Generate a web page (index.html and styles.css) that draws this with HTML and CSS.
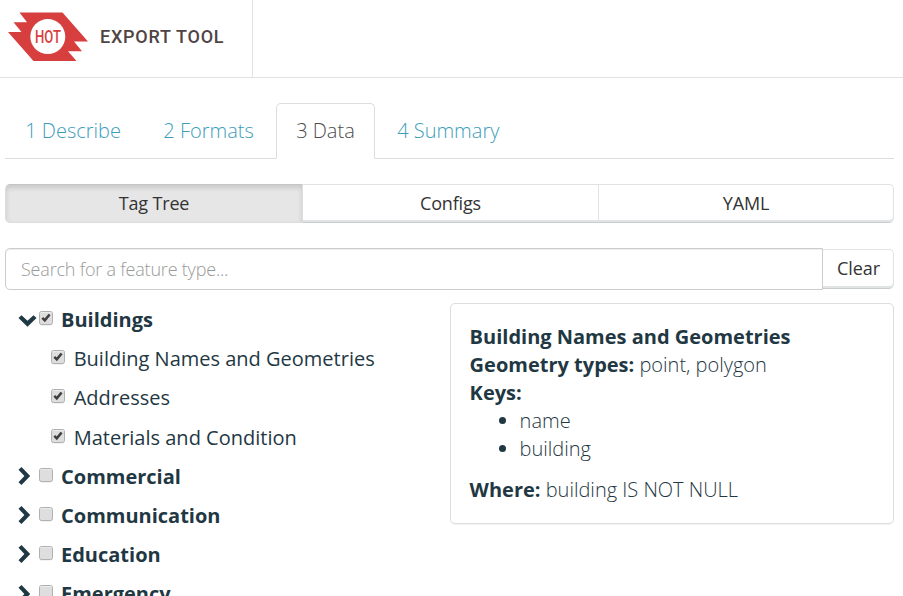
FILE: index.html
```html
<!DOCTYPE html>
<html lang="en">
<head>
<meta charset="utf-8">
<title>Export Tool</title>
<link rel="stylesheet" href="styles.css">
</head>
<body>
<svg class="sprite" aria-hidden="true">
  <defs>
    <symbol id="unchecked" viewBox="0 0 14 15"><rect x=".5" y="1.5" width="13" height="13" rx="2" fill="#000" opacity=".1"/><rect x=".5" y=".5" width="13" height="13" rx="2" fill="#dedede" stroke="#b0b0b0"/><path d="M1.500 1.500H12.500" stroke="#ebebeb"/></symbol>
    <symbol id="checked" viewBox="0 0 14 15"><use href="#unchecked" width="14" height="15"/><path d="M3.300 6.800 5.800 9.300 10.600 3.500" fill="none" stroke="#404040" stroke-width="2.600"/></symbol>
    <symbol id="right" viewBox="0 0 13 18"><path d="M3.500 0 12.200 9 3.500 18 .5 15.200 6.400 9 .5 2.800Z" fill="#1f3843"/></symbol>
    <symbol id="down" viewBox="0 0 19 12"><path d="M3.500 .2 9.500 5.800 15.500 .2 18.500 3 9.500 11.800 .5 3Z" fill="#1f3843"/></symbol>
  </defs>
</svg>
<header class="header">
  <a class="brand">
    <svg class="logo" viewBox="0.5 0 82 50" width="82" height="50">
      <path d="M12 .4H55L80.500 29.500H66.500L74.500 39.200H60.500L69 49H26L.5 20H14L6 10.200H19.500Z" fill="#d73f3f"/>
      <circle cx="40.300" cy="24.600" r="17.500" fill="#fff"/>
      <text class="logo-text" x="40.500" y="31" text-anchor="middle" textLength="26" lengthAdjust="spacingAndGlyphs">HOT</text>
    </svg>
    <span class="brand-name">EXPORT TOOL</span>
  </a>
</header>
<main class="content">
  <nav class="tabs">
    <a class="tab">1 Describe</a>
    <a class="tab">2 Formats</a>
    <a class="tab active">3 Data</a>
    <a class="tab">4 Summary</a>
  </nav>
  <div class="button-group">
    <button class="button pressed">Tag Tree</button>
    <button class="button">Configs</button>
    <button class="button">YAML</button>
  </div>
  <div class="search">
    <input class="search-input" type="text" placeholder="Search for a feature type...">
    <button class="button clear">Clear</button>
  </div>
  <div class="columns">
    <div class="tree">
      <div class="row"><svg class="arrow down"><use href="#down"/></svg><svg class="check"><use href="#checked"/></svg><span class="label">Buildings</span></div>
      <div class="row child"><svg class="check"><use href="#checked"/></svg><span class="label">Building Names and Geometries</span></div>
      <div class="row child"><svg class="check"><use href="#checked"/></svg><span class="label">Addresses</span></div>
      <div class="row child"><svg class="check"><use href="#checked"/></svg><span class="label">Materials and Condition</span></div>
      <div class="row"><svg class="arrow"><use href="#right"/></svg><svg class="check"><use href="#unchecked"/></svg><span class="label">Commercial</span></div>
      <div class="row"><svg class="arrow"><use href="#right"/></svg><svg class="check"><use href="#unchecked"/></svg><span class="label">Communication</span></div>
      <div class="row"><svg class="arrow"><use href="#right"/></svg><svg class="check"><use href="#unchecked"/></svg><span class="label">Education</span></div>
      <div class="row"><svg class="arrow"><use href="#right"/></svg><svg class="check"><use href="#unchecked"/></svg><span class="label">Emergency</span></div>
    </div>
    <section class="card">
      <div><strong>Building Names and Geometries</strong></div>
      <div><strong>Geometry types:</strong> point, polygon</div>
      <div><strong>Keys:</strong></div>
      <ul class="keys"><li>name</li><li>building</li></ul>
      <div><strong>Where:</strong> building IS NOT NULL</div>
    </section>
  </div>
</main>
</body>
</html>
```
FILE: styles.css
```css
* { box-sizing: border-box; }
html, body { height: 100%; }
body {
  margin: 0;
  overflow: hidden;
  background: #fff;
  color: #1f3843;
  font: 300 20px/28px "Open Sans", sans-serif;
}
.sprite { display: none; }
.header { height: 78px; border-bottom: 1px solid #e1e1e1; }
.brand {
  display: flex;
  width: 253px;
  height: 77px;
  padding: 12px 0 0 8px;
  border-right: 1px solid #e1e1e1;
}
.logo-text { font: 500 18px Roboto, sans-serif; fill: #d73f3f; }
.brand-name {
  margin: 11px 0 0 10px;
  color: #4f4444;
  font: 500 18px/28px Roboto, sans-serif;
  letter-spacing: .75px;
  white-space: nowrap;
}
.content { padding: 25px 9px 0 5px; }
.tabs { display: flex; gap: 2px; height: 56px; border-bottom: 1px solid #ddd; }
.tab {
  height: 56px;
  padding: 13px 19.2px 0;
  border: 1px solid transparent;
  border-radius: 5px 5px 0 0;
  color: #3e9dba;
}
.tab.active { color: #4c4c4c; border-color: #ddd; border-bottom-color: #fff; background: #fff; }
.button-group { display: grid; grid-template-columns: 298px 296px 1fr; margin-top: 25px; height: 39px; }
.button {
  padding: 0 0 2px;
  border: 1px solid #dfe3e4;
  border-left-width: 0;
  border-bottom-color: #c7cccf;
  box-shadow: inset 0 -2px 0 #e0e4e5;
  background: #fff;
  color: #333;
  font: 400 18px/28px "Open Sans", sans-serif;
  letter-spacing: -.15px;
}
.button:last-child { border-radius: 0 5px 5px 0; }
.button.pressed {
  border: 1px solid #ddd;
  border-top-color: #c6c6c6;
  border-radius: 5px 0 0 5px;
  background: #e6e6e6;
  box-shadow: inset 0 3px 5px rgba(0, 0, 0, .125);
}
.search { display: flex; margin-top: 25px; height: 42px; }
.search-input {
  flex: 1;
  min-width: 0;
  padding: 0 15px;
  border: 1px solid #ccc;
  border-radius: 5px 0 0 5px;
  box-shadow: inset 0 1px 1px rgba(0, 0, 0, .075);
  font: 300 18px/28px "Open Sans", sans-serif;
  letter-spacing: -.2px;
}
.search-input::placeholder { color: #999; opacity: 1; }
.clear { flex: 0 0 71px; height: 40px; margin-top: 1px; padding-left: 1px; letter-spacing: -.1px; }
.columns { display: grid; grid-template-columns: 445px 1fr; align-items: start; margin-top: 13px; }
.tree { padding: 3px 0 0 13px; }
.row { display: flex; height: 39.2px; white-space: nowrap; font-weight: 700; }
.row.child { padding-left: 33px; font-weight: 400; }
.arrow { width: 13px; height: 18px; margin: 4.3px 7px 0 0; flex: none; }
.arrow.down { width: 19px; height: 12px; margin: 9px 1px 0 0; }
.check { width: 14px; height: 15px; margin: 5px 8px 0 1px; flex: none; }
.child .check { margin-left: 0; margin-right: 8.7px; }
.card {
  height: 221px;
  padding: 19px 19px 19px 18.6px;
  border: 1px solid #ddd;
  border-radius: 5px;
  box-shadow: 0 1px 1px rgba(0, 0, 0, .05);
}
.keys { margin: 0 0 13px; padding-left: 50px; }
strong { font-weight: 700; }
```
